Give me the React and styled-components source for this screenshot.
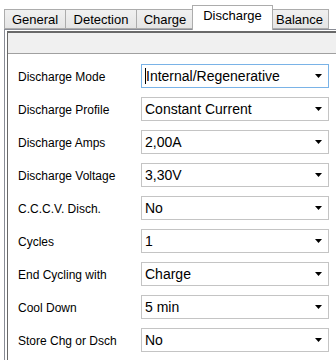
import React from 'react';
import styled, { createGlobalStyle } from 'styled-components';

const Global = createGlobalStyle`
  html, body { margin: 0; padding: 0; background: #ffffff; }
  body { font-family: "Liberation Sans", Arial, sans-serif; }
`;

const Window = styled.div`
  width: 336px;
  height: 360px;
  overflow: hidden;
  background: #ffffff;
  position: relative;
`;

const TabStrip = styled.div`
  display: flex;
  align-items: flex-end;
  height: 29px;
  padding-left: 4px;
  position: relative;
  z-index: 2;
`;

const Tab = styled.div`
  box-sizing: border-box;
  height: ${p => (p.active ? '25px' : '20px')};
  width: ${p => p.w}px;
  margin: ${p => (p.active ? '0 -2px -1px -2px' : '0')};
  padding-top: ${p => (p.active ? '2px' : '2px')};
  border: 1px solid #acacac;
  border-bottom: ${p => (p.active ? 'none' : '1px solid #acacac')};
  border-left: ${p => (p.first || p.active ? '1px solid #acacac' : 'none')};
  background: ${p => (p.active ? '#ffffff' : 'linear-gradient(#f0f0f0, #e5e5e5)')};
  font-size: 13px;
  color: #000;
  text-align: center;
  position: relative;
  z-index: ${p => (p.active ? 3 : 1)};
`;

const Page = styled.div`
  box-sizing: border-box;
  margin-left: 4px;
  height: 331px;
  border-top: 1px solid #898c95;
  border-left: 1px solid #898c95;
  padding: 1px 0 0 2px;
`;

const Sunken = styled.div`
  box-sizing: border-box;
  height: 100%;
  border-top: 2px solid #696969;
  border-left: 1px solid #696969;
  background: #ffffff;
`;

const HeaderBar = styled.div`
  height: 20px;
  background: #f0f0f0;
  border-bottom: 1px solid #a0a0a0;
`;

const Form = styled.div`
  display: flex;
  flex-direction: column;
  gap: 9px;
  padding: 10px 0 0 10px;
`;

const Row = styled.div`
  display: flex;
  align-items: center;
  height: 24px;
`;

const Label = styled.div`
  width: 123px;
  font-size: 12px;
  color: #000;
  padding-top: 2px;
`;

const Combo = styled.div`
  box-sizing: border-box;
  width: 188px;
  height: 24px;
  border: 1px solid ${p => (p.focused ? '#7ab3e7' : '#c4c4c4')};
  background: #ffffff;
  display: flex;
  align-items: center;
  padding-left: 3px;
  font-size: 14px;
  color: #000;
  position: relative;
`;

const Caret = styled.span`
  display: inline-block;
  width: 1px;
  height: 16px;
  background: #000;
  margin-right: 0px;
`;

const Arrow = styled.svg`
  position: absolute;
  right: 6px;
  top: 9px;
`;

const tabs = [
  { label: 'General', w: 62 },
  { label: 'Detection', w: 71 },
  { label: 'Charge', w: 57 },
  { label: 'Discharge', w: 81, active: true },
  { label: 'Balance', w: 58 },
];

const rows = [
  ['Discharge Mode', 'Internal/Regenerative', true],
  ['Discharge Profile', 'Constant Current'],
  ['Discharge Amps', '2,00A'],
  ['Discharge Voltage', '3,30V'],
  ['C.C.C.V. Disch.', 'No'],
  ['Cycles', '1'],
  ['End Cycling with', 'Charge'],
  ['Cool Down', '5 min'],
  ['Store Chg or Dsch', 'No'],
];

export default function App() {
  return (
    <Window>
      <Global />
      <TabStrip>
        {tabs.map((t, i) => (
          <Tab key={t.label} w={t.w} active={t.active} first={i === 0}>
            {t.label}
          </Tab>
        ))}
      </TabStrip>
      <Page>
        <Sunken>
          <HeaderBar />
          <Form>
            {rows.map(([label, value, focused]) => (
              <Row key={label}>
                <Label>{label}</Label>
                <Combo focused={focused}>
                  {focused && <Caret />}
                  {value}
                  <Arrow width="7" height="4" viewBox="0 0 7 4">
                    <path d="M0 0 H7 L3.5 4 Z" fill="#000" />
                  </Arrow>
                </Combo>
              </Row>
            ))}
          </Form>
        </Sunken>
      </Page>
    </Window>
  );
}
